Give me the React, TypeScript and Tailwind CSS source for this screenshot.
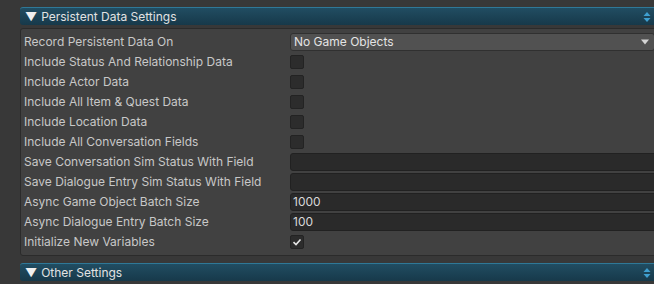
import type * as React from "react"

const font = { fontFamily: "Inter, 'Noto Sans', sans-serif" }

function SortIcon() {
  return (
    <svg width="8" height="12" viewBox="0 0 8 12" className="mr-[1px]">
      <path d="M4 1 L7.5 5 L0.5 5 Z" fill="#3f9fcf" />
      <path d="M4 11 L7.5 7 L0.5 7 Z" fill="#3f9fcf" />
    </svg>
  )
}

function Foldout({ title }: { title: string }) {
  return (
    <div className="flex h-[18px] items-center justify-between rounded-l-[3px] border-t border-[#2f7897] bg-gradient-to-b from-[#214d62] to-[#17394a] pl-[5px] pr-[2px]">
      <span className="flex items-center text-[12px] leading-none text-[#e2e2e2]">
        <span className="mr-[4px] text-[12px] text-[#f0f0f0]">▼</span>
        {title}
      </span>
      <SortIcon />
    </div>
  )
}

function Checkbox({ checked }: { checked?: boolean }) {
  return (
    <div className="flex h-[14px] w-[14px] items-center justify-center rounded-[2px] border border-[#232323] bg-[#2c2c2c]">
      {checked && (
        <svg width="10" height="10" viewBox="0 0 10 10">
          <path d="M1.5 5.2 L4 7.5 L8.5 2.5" stroke="#e6e6e6" strokeWidth="1.6" fill="none" />
        </svg>
      )}
    </div>
  )
}

function TextField({ value }: { value?: string }) {
  return (
    <div className="flex h-[18px] flex-1 items-center rounded-[3px] border border-[#212121] bg-[#2a2a2a] pl-[2px] text-[12px] text-[#d8d8d8]">
      {value}
    </div>
  )
}

function Row({ label, children }: { label: string; children: React.ReactNode }) {
  return (
    <div className="flex h-[20px] items-center">
      <div className="w-[266px] shrink-0 text-[12px] text-[#c8c8c8]">{label}</div>
      <div className="flex flex-1 items-center">{children}</div>
    </div>
  )
}

export default function App() {
  return (
    <div className="h-[284px] w-[654px] overflow-hidden bg-[#383838]" style={font}>
      <div className="ml-[20px] w-[634px] pt-[7px]">
        <Foldout title="Persistent Data Settings" />
        <div className="mt-[3px] mr-[-8px] rounded-[3px] border border-[#2b2b2b] bg-[#414141] pb-[3px] pl-[3px] pt-[3px]">
          <Row label="Record Persistent Data On">
            <div className="mr-[6px] flex h-[18px] flex-1 items-center justify-between rounded-[3px] border border-[#303030] bg-[#515151] pl-[3px] pr-[5px] text-[12px] text-[#e4e4e4]">
              <span>No Game Objects</span>
              <svg width="8" height="6" viewBox="0 0 8 6">
                <path d="M0 0.5 L8 0.5 L4 5.5 Z" fill="#d4d4d4" />
              </svg>
            </div>
          </Row>
          <Row label="Include Status And Relationship Data">
            <Checkbox />
          </Row>
          <Row label="Include Actor Data">
            <Checkbox />
          </Row>
          <Row label="Include All Item & Quest Data">
            <Checkbox />
          </Row>
          <Row label="Include Location Data">
            <Checkbox />
          </Row>
          <Row label="Include All Conversation Fields">
            <Checkbox />
          </Row>
          <Row label="Save Conversation Sim Status With Field">
            <TextField />
          </Row>
          <Row label="Save Dialogue Entry Sim Status With Field">
            <TextField />
          </Row>
          <Row label="Async Game Object Batch Size">
            <TextField value="1000" />
          </Row>
          <Row label="Async Dialogue Entry Batch Size">
            <TextField value="100" />
          </Row>
          <Row label="Initialize New Variables">
            <Checkbox checked />
          </Row>
        </div>
        <div className="mt-[7px]">
          <Foldout title="Other Settings" />
        </div>
      </div>
    </div>
  )
}
